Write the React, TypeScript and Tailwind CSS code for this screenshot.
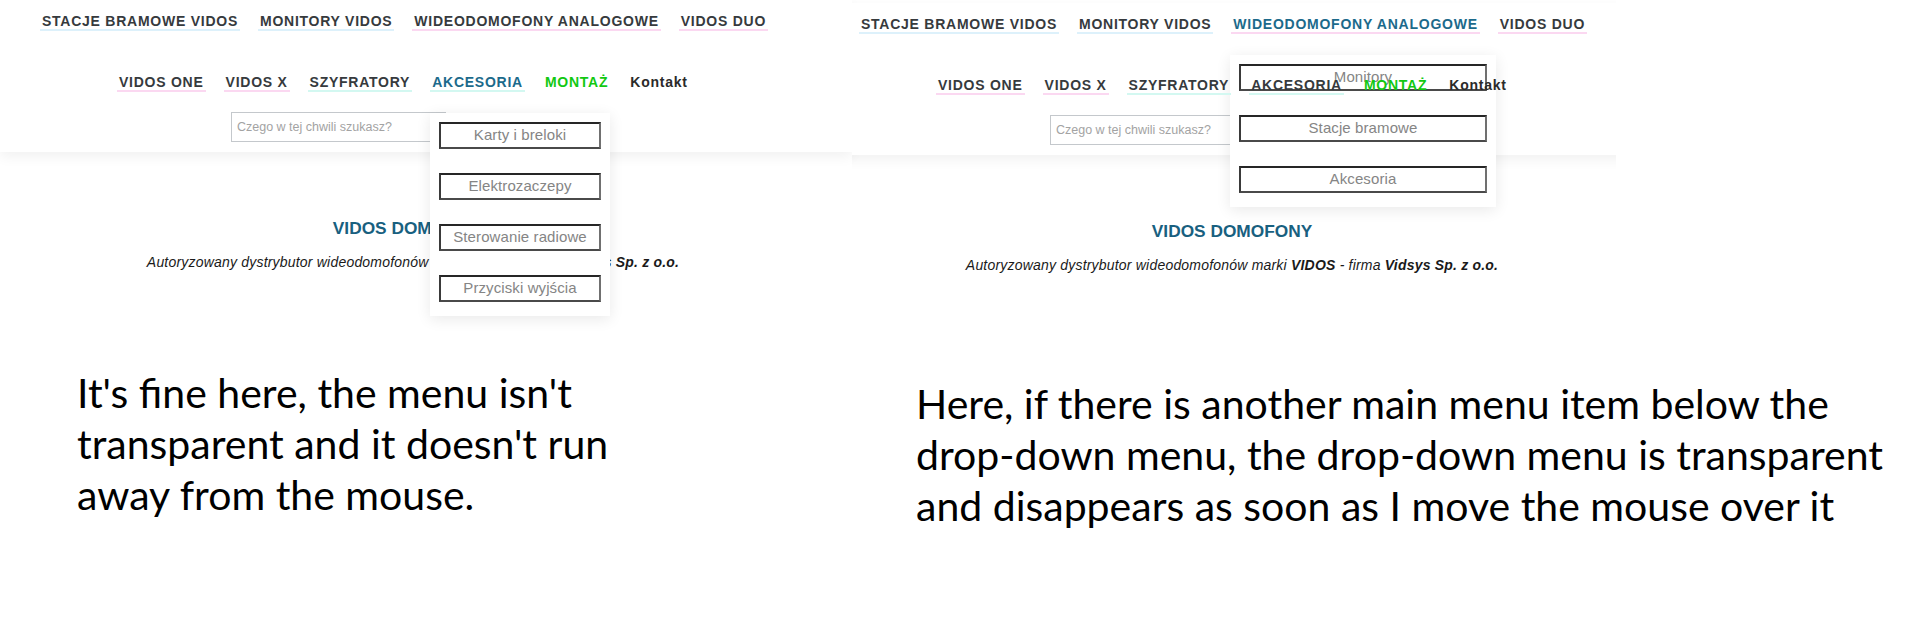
import React from "react";

type NavItem = { label: string; color: string; line: string };

const DARK = "text-[#363a3d]";
const TEAL = "text-[#1c6a8b]";
const GREEN = "text-[#12c812]";
const BLUE_LINE = "border-[#ddf1fb]";
const PINK_LINE = "border-[#fbd8f1]";
const CYAN_LINE = "border-[#d3f8f1]";
const NO_LINE = "border-transparent";

function row1(activeWideo: boolean): NavItem[] {
  return [
    { label: "STACJE BRAMOWE VIDOS", color: DARK, line: BLUE_LINE },
    { label: "MONITORY VIDOS", color: DARK, line: BLUE_LINE },
    { label: "WIDEODOMOFONY ANALOGOWE", color: activeWideo ? TEAL : DARK, line: PINK_LINE },
    { label: "VIDOS DUO", color: DARK, line: PINK_LINE },
  ];
}

function row2(activeAkc: boolean): NavItem[] {
  return [
    { label: "VIDOS ONE", color: DARK, line: PINK_LINE },
    { label: "VIDOS X", color: DARK, line: PINK_LINE },
    { label: "SZYFRATORY", color: DARK, line: CYAN_LINE },
    { label: "AKCESORIA", color: activeAkc ? TEAL : DARK, line: CYAN_LINE },
    { label: "MONTAŻ", color: GREEN, line: NO_LINE },
    { label: "Kontakt", color: "text-[#2a2a2a]", line: NO_LINE },
  ];
}

function NavLink({ item }: { item: NavItem }) {
  return (
    <span
      className={`px-[2px] border-b-2 ${item.line} ${item.color} text-[14px] leading-[16px] font-bold tracking-[0.75px] whitespace-nowrap`}
    >
      {item.label}
    </span>
  );
}

function Dropdown({ items, className }: { items: string[]; className: string }) {
  return (
    <div
      className={`absolute z-10 bg-white shadow-[0_3px_14px_rgba(0,0,0,0.09)] flex flex-col gap-[24px] px-[9px] pt-[9px] pb-[14px] ${className}`}
    >
      {items.map((t) => (
        <div
          key={t}
          className="h-[27px] border-2 border-t-[#262626] border-l-[#3a3a3a] border-r-[#707070] border-b-[#4a4a4a] flex items-center justify-center text-[15px] tracking-[0.1px] text-[#858585] whitespace-nowrap"
        >
          {t}
        </div>
      ))}
    </div>
  );
}

function Screen({ right }: { right: boolean }) {
  return (
    <div className="relative w-[852px] h-[340px] font-['Liberation_Sans',Arial,sans-serif]">
      <header className="h-[152px] bg-white shadow-[0_5px_12px_rgba(0,0,0,0.055)]">
        <nav className="flex pt-[13px] pl-[40px] gap-[18px]">
          {row1(right).map((i) => (
            <NavLink key={i.label} item={i} />
          ))}
        </nav>
        <nav className="relative z-20 flex mt-[43px] pl-[117px] gap-[18px]">
          {row2(!right).map((i) => (
            <NavLink key={i.label} item={i} />
          ))}
        </nav>
        <div className="mt-[20px] ml-[231px] w-[215px] h-[30px] border border-[#c4c8cc] flex items-center pl-[5px] text-[12.5px] text-[#a3a3a3] whitespace-nowrap">
          Czego w tej chwili szukasz?
        </div>
      </header>
      <main className="w-[826px] text-center pt-[66px]">
        <h2 className="text-[17.3px] leading-[20px] font-bold text-[#18607f]">VIDOS DOMOFONY</h2>
        <p className="mt-[16px] text-[14px] leading-[16px] italic tracking-[0.2px] text-[#1a1a1a]">
          Autoryzowany dystrybutor wideodomofonów marki <b>VIDOS</b> - firma <b>Vidsys Sp. z o.o.</b>
        </p>
      </main>
      {right ? (
        <Dropdown
          items={["Monitory", "Stacje bramowe", "Akcesoria"]}
          className="left-[411px] top-[52px] w-[266px]"
        />
      ) : (
        <Dropdown
          items={["Karty i breloki", "Elektrozaczepy", "Sterowanie radiowe", "Przyciski wyjścia"]}
          className="left-[430px] top-[113px] w-[180px]"
        />
      )}
    </div>
  );
}

export default function App() {
  return (
    <div className="w-[1920px] h-[633px] bg-white overflow-hidden">
      <div className="flex">
        <div className="w-[852px] shrink-0">
          <Screen right={false} />
        </div>
        <div className="w-[764px] h-[343px] shrink-0 overflow-hidden">
          <div className="w-[852px] -ml-[33px] mt-[3px]">
            <Screen right={true} />
          </div>
        </div>
      </div>
      <div className="flex font-['Lato',sans-serif] text-[41px] leading-[51px] text-black">
        <div className="w-[852px] shrink-0 pl-[77px] pt-[24px]">
          <p>It's fine here, the menu isn't</p>
          <p>transparent and it doesn't run</p>
          <p>away from the mouse.</p>
        </div>
        <div className="pl-[64px] pt-[35px]">
          <p>Here, if there is another main menu item below the</p>
          <p>drop-down menu, the drop-down menu is transparent</p>
          <p>and disappears as soon as I move the mouse over it</p>
        </div>
      </div>
    </div>
  );
}
